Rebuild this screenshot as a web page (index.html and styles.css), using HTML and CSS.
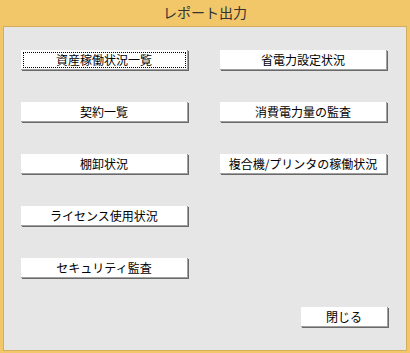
FILE: index.html
```html
<!DOCTYPE html>
<html lang="ja">
<head>
    <meta charset="UTF-8">
    <title>レポート出力</title>
    <link rel="stylesheet" href="styles.css">
</head>
<body>
    <div class="window">
        <div class="title-bar">レポート出力</div>
        <div class="panel">
            <div class="report-grid">
                <button class="btn focused">資産稼働状況一覧</button>
                <button class="btn">省電力設定状況</button>
                <button class="btn">契約一覧</button>
                <button class="btn">消費電力量の監査</button>
                <button class="btn">棚卸状況</button>
                <button class="btn">複合機/プリンタの稼働状況</button>
                <button class="btn">ライセンス使用状況</button>
                <div></div>
                <button class="btn">セキュリティ監査</button>
            </div>
            <div class="footer">
                <button class="btn btn-close">閉じる</button>
            </div>
        </div>
    </div>
</body>
</html>
```

FILE: styles.css
```css
body {
    margin: 0;
    background: #f1c76a;
    font-family: "Noto Sans CJK JP", "Noto Sans", sans-serif;
}

.window {
    width: 410px;
    height: 353px;
    display: flex;
    flex-direction: column;
}

.title-bar {
    height: 26px;
    line-height: 25px;
    text-align: center;
    font-size: 14px;
    color: #333;
}

.panel {
    height: 325px;
    box-sizing: border-box;
    margin: 0 3px 0 3px;
    background: #e6e6e6;
    border: 1px solid #d4ae5c;
    display: flex;
    flex-direction: column;
    padding: 23px 18px 23px 17px;
}

.report-grid {
    display: grid;
    grid-template-columns: 167px 167px;
    column-gap: 32px;
    row-gap: 32px;
}

.btn {
    box-sizing: border-box;
    height: 20px;
    width: 167px;
    margin: 0;
    padding: 0;
    background: #fff;
    border: none;
    border-right: 1px solid #a0a0a0;
    border-bottom: 1px solid #a0a0a0;
    box-shadow: 1px 1px 0 #696969;
    font-family: inherit;
    font-size: 12px;
    line-height: 19px;
    color: #000;
    text-align: center;
}

.focused {
    outline: 1px dotted #000;
    outline-offset: -3px;
}

.footer {
    margin-top: auto;
    display: flex;
    justify-content: flex-end;
}

.btn-close {
    width: 87px;
}
```
